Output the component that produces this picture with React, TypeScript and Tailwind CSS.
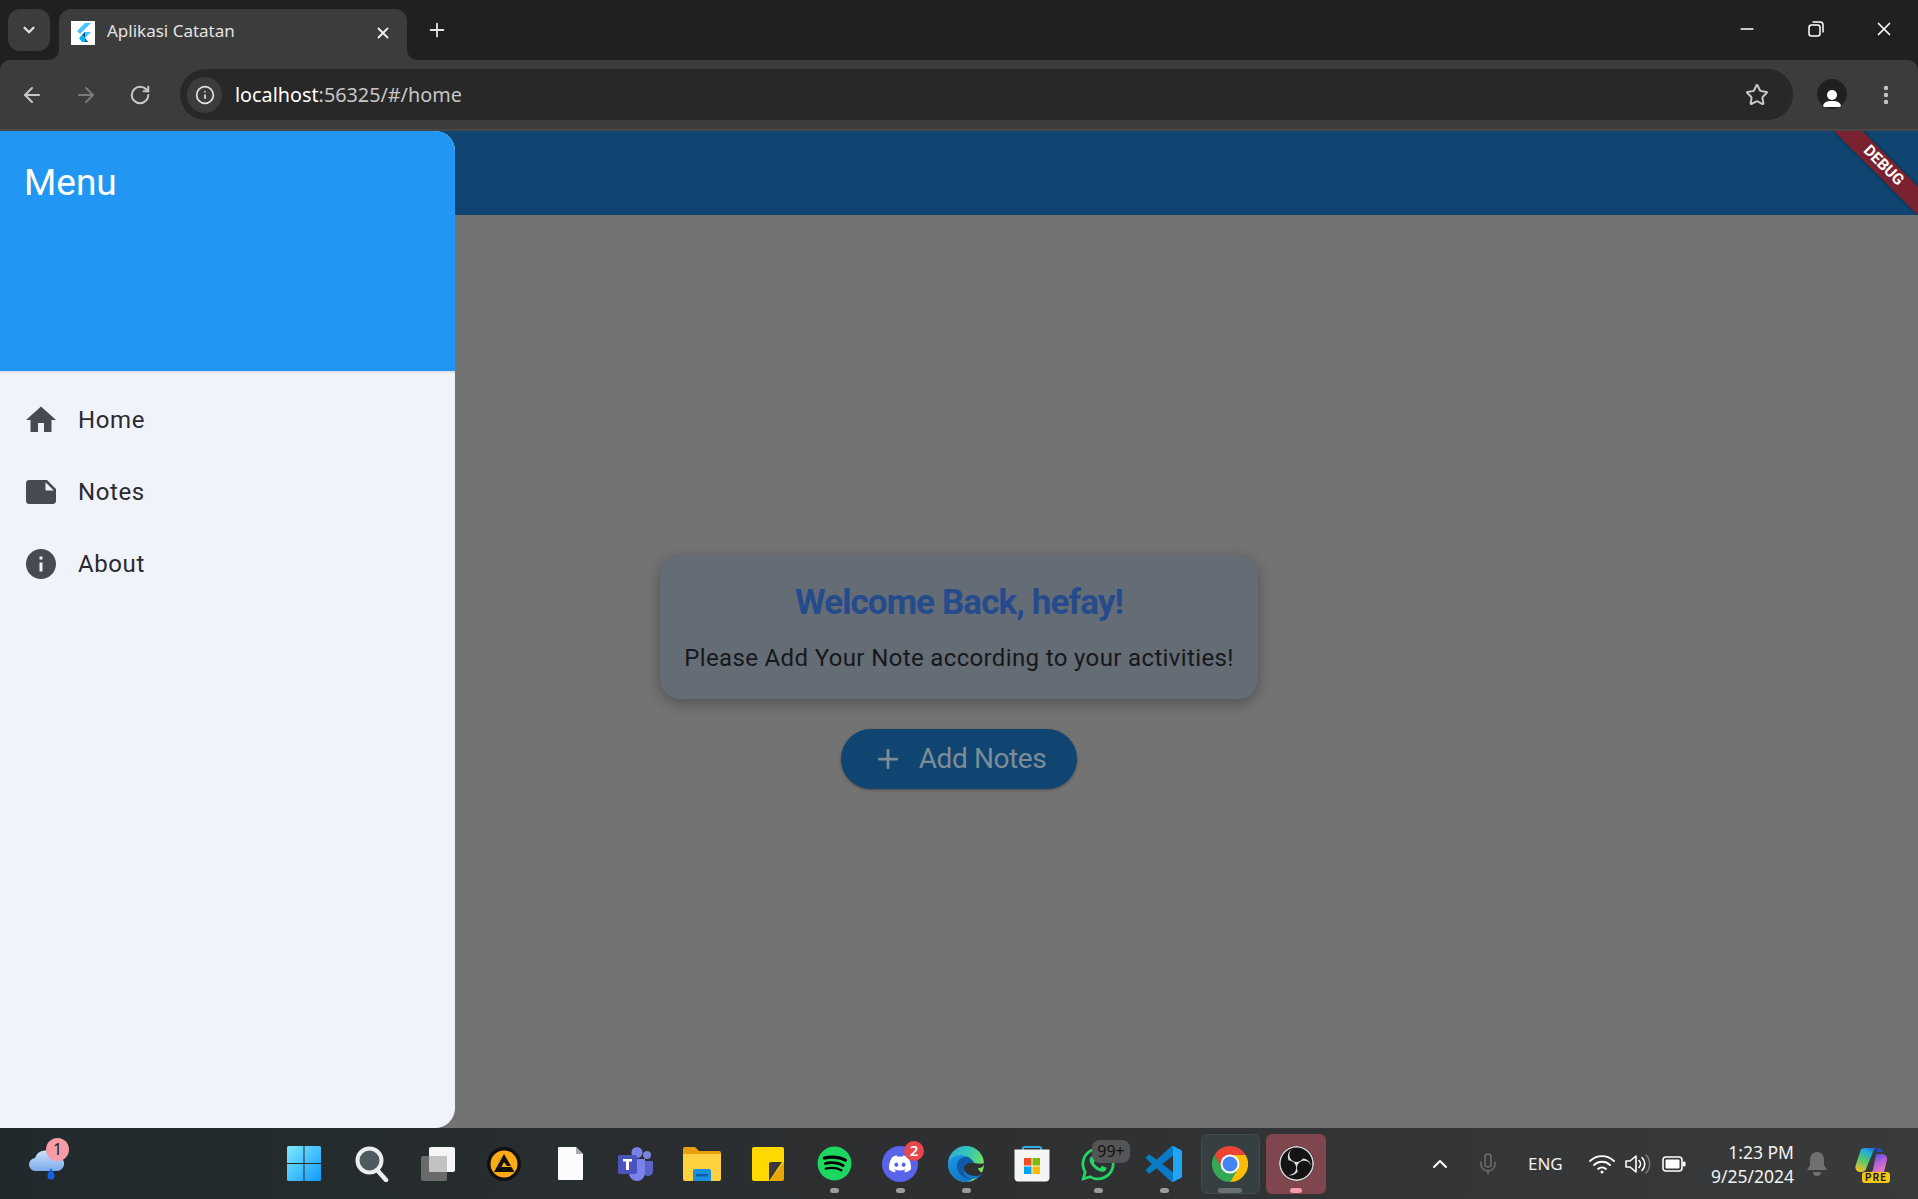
// Flutter notes app in a Chrome window with the drawer open, Windows 11 taskbar below
import type { ReactNode } from 'react';
import { ArrowLeft, ArrowRight, ChevronDown, ChevronUp, Info, Mic, Minus, MoreVertical, Plus, RotateCw, Star, X } from 'lucide-react';
import { FaDiscord, FaSpotify, FaWhatsapp } from 'react-icons/fa';
import { SiObsstudio } from 'react-icons/si';

const roboto = "font-['Roboto',sans-serif]";
const segoe = "font-['Noto_Sans',sans-serif]";

function FlutterFavicon() {
  return (
    <svg viewBox="0 0 24 24" className="h-full w-full bg-white">
      <path d="M14 2h6L9 13l-3-3z" fill="#47c5fb" />
      <path d="M14 11h6l-6 6-3-3z" fill="#47c5fb" />
      <path d="M11 14l3-3 0 6z" fill="#00569e" />
      <path d="M11 14l3 3 3 4h-6l-3-4z" fill="#00b5f8" />
      <path d="M14 17l3 4h-3z" fill="#00569e" />
    </svg>
  );
}

function TabStrip() {
  return (
    <div className="flex h-[60px] items-end bg-[#1f2020] pl-2">
      <div className="mb-[9px] flex h-[42px] w-[42px] items-center justify-center rounded-[12px] bg-[#3c3c3c]">
        <ChevronDown size={18} strokeWidth={3} className="text-[#e3e3e3]" />
      </div>
      <div className="relative ml-[9px] flex h-[51px] w-[348px] items-center rounded-t-[12px] bg-[#3c3c3c] pb-[3px] pl-3 pr-[15px]">
        <span className="absolute -left-[10px] bottom-0 h-[10px] w-[10px] bg-[#3c3c3c]">
          <span className="block h-full w-full rounded-br-[10px] bg-[#1f2020]" />
        </span>
        <span className="absolute -right-[10px] bottom-0 h-[10px] w-[10px] bg-[#3c3c3c]">
          <span className="block h-full w-full rounded-bl-[10px] bg-[#1f2020]" />
        </span>
        <div className="h-6 w-6 shrink-0">
          <FlutterFavicon />
        </div>
        <span className={`ml-3 flex-1 pb-[4px] text-[17px] leading-[24px] text-[#e3e3e3] ${segoe}`}>Aplikasi Catatan</span>
        <X size={18} strokeWidth={2.4} className="text-[#f0f0f0]" />
      </div>
      <div className="mb-[9px] ml-[9px] flex h-[42px] w-[42px] items-center justify-center">
        <Plus size={22} strokeWidth={2} className="text-[#e3e3e3]" />
      </div>
      <div className="mb-[20px] ml-auto flex items-center">
        <div className="flex w-[70px] justify-center">
          <Minus size={20} strokeWidth={2} className="text-white" />
        </div>
        <div className="flex w-[68px] justify-center">
          <svg width="16" height="16" viewBox="0 0 16 16" fill="none" stroke="white" strokeWidth="1.5">
            <rect x="1" y="4" width="11" height="11" rx="2.5" />
            <path d="M4.5 1h7.5a3 3 0 0 1 3 3v7.5" />
          </svg>
        </div>
        <div className="flex w-[68px] justify-center">
          <X size={22} strokeWidth={1.8} className="text-white" />
        </div>
      </div>
    </div>
  );
}

function Toolbar() {
  return (
    <div className="flex h-[71px] items-start rounded-t-[10px] border-b-2 border-[#484848] bg-[#3c3c3c] pt-[9px]">
      <div className="flex h-[51px] w-[180px] items-center pl-[10px]">
        <div className="flex w-[44px] justify-center">
          <ArrowLeft size={24} strokeWidth={2} className="text-[#c7c7c7]" />
        </div>
        <div className="ml-[10px] flex w-[44px] justify-center">
          <ArrowRight size={24} strokeWidth={2} className="text-[#7a7a7a]" />
        </div>
        <div className="ml-[10px] flex w-[44px] justify-center">
          <RotateCw size={22} strokeWidth={2.2} className="text-[#c7c7c7]" />
        </div>
      </div>
      <div className="flex h-[51px] w-[1613px] items-center rounded-full bg-[#282828] pl-[7px] pr-[24px]">
        <div className="flex h-[36px] w-[35px] items-center justify-center rounded-full bg-[#3c3c3c]">
          <Info size={20} strokeWidth={2} className="text-[#e3e3e3]" />
        </div>
        <span className={`ml-[13px] flex-1 text-[19.8px] ${segoe}`}>
          <span className="text-white">localhost</span>
          <span className="text-[#c7c7c7]">:56325/#/home</span>
        </span>
        <Star size={24} strokeWidth={2} className="text-[#c7c7c7]" />
      </div>
      <div className="ml-[24px] flex h-[30px] w-[30px] translate-y-[10px] items-end justify-center overflow-hidden rounded-full bg-[#1f2020]">
        <svg width="22" height="24" viewBox="0 0 22 24" fill="white">
          <circle cx="11" cy="10" r="5" />
          <path d="M2 22c0-5 4-6 9-6s9 1 9 6z" />
        </svg>
      </div>
      <div className="ml-[27px] flex h-[51px] w-[24px] items-center justify-center">
        <MoreVertical size={24} strokeWidth={2.4} className="text-[#c7c7c7]" />
      </div>
    </div>
  );
}

function DebugBanner() {
  return (
    <div className="absolute right-0 top-0 h-[84px] w-[84px] overflow-hidden">
      <div
        className={`absolute left-[-21px] top-[25px] flex h-[20px] w-[140px] rotate-45 items-center justify-center bg-[#7a2230] text-[15.5px] font-bold leading-none text-white shadow-[0_0_4px_rgba(0,0,0,0.35)] ${roboto}`}
      >
        DEBUG
      </div>
    </div>
  );
}

function HomeIcon() {
  return <path d="M10 20v-6h4v6h5v-8h3L12 3 2 12h3v8z" />;
}

function NoteIcon() {
  return <path d="M22 10l-6-6H4c-1.1 0-2 .9-2 2v12.01c0 1.1.9 1.99 2 1.99l16-.01c1.1 0 2-.89 2-1.99v-8zm-7-4.5l5.5 5.5H15V5.5z" />;
}

function InfoIcon() {
  return <path d="M12 2C6.48 2 2 6.48 2 12s4.48 10 10 10 10-4.48 10-10S17.52 2 12 2zm1 15h-2v-6h2v6zm0-8h-2V7h2v2z" />;
}

const menuItems = [
  { label: 'Home', icon: <HomeIcon /> },
  { label: 'Notes', icon: <NoteIcon /> },
  { label: 'About', icon: <InfoIcon /> },
];

function Drawer() {
  return (
    <aside className={`absolute bottom-0 left-0 top-0 w-[455px] overflow-hidden rounded-r-[20px] bg-[#f1f3fb] ${roboto}`}>
      <div className="h-[242px] border-b-2 border-[#e1e3ec] bg-[#2196f3] pl-[24px] pt-[30px]">
        <h2 className="text-[37px] leading-[43px] text-white">Menu</h2>
      </div>
      <nav className="pt-[11px]">
        {menuItems.map((item) => (
          <div key={item.label} className="flex h-[72px] items-center pl-[23px]">
            <svg viewBox="0 0 24 24" width="36" height="36" fill="#454a53">
              {item.icon}
            </svg>
            <span className="ml-[19px] text-[24px] leading-none tracking-[0.6px] text-[#2a2a30]">{item.label}</span>
          </div>
        ))}
      </nav>
    </aside>
  );
}

function Page() {
  return (
    <div className={`relative flex min-h-0 flex-1 flex-col bg-[#737374] ${roboto}`}>
      <header className="relative h-[84px] shrink-0 bg-[#0f4570]">
        <DebugBanner />
      </header>
      <main className="flex flex-1 flex-col items-center justify-center">
        <div className="flex h-[144px] w-[598px] flex-col items-center rounded-[20px] bg-[#646c75] pt-[26px] shadow-[0_4px_14px_rgba(0,0,0,0.3)]">
          <h1 className="text-[35px] font-bold leading-[44px] tracking-[-0.9px] text-[#254b8c]">Welcome Back, hefay!</h1>
          <p className="mt-[17px] text-[24px] leading-[32px] tracking-[0.36px] text-[#17181b]">Please Add Your Note according to your activities!</p>
        </div>
        <button className="mt-[30px] flex h-[60px] w-[236px] items-center justify-center rounded-full bg-[#0f4570] shadow-[0_1px_3px_rgba(0,0,0,0.35)]">
          <Plus size={30} strokeWidth={2.2} className="translate-x-[1px] text-[#7d8c99]" />
          <span className="ml-[17px] text-[28px] leading-none tracking-[-0.4px] text-[#7d8c99]">Add Notes</span>
        </button>
      </main>
      <Drawer />
    </div>
  );
}

function WeatherIcon() {
  return (
    <svg width="38" height="34" viewBox="0 0 38 34">
      <defs>
        <linearGradient id="cloud" x1="0" y1="0" x2="0" y2="1">
          <stop offset="0" stopColor="#cfe1fb" />
          <stop offset="1" stopColor="#7aa9ec" />
        </linearGradient>
      </defs>
      <path d="M8 24a6.5 6.5 0 0 1-1-13A11 11 0 0 1 27 9a7.5 7.5 0 0 1 3 15z" fill="url(#cloud)" />
      <path d="M23 21c2 3.5 3.5 5.5 3.5 8a3.5 3.5 0 0 1-7 0c0-2.5 1.5-4.5 3.5-8z" fill="#1461e6" />
    </svg>
  );
}

function WindowsIcon() {
  return (
    <svg width="34" height="35" viewBox="0 0 34 35" className="-translate-x-[2px]">
      <defs>
        <linearGradient id="win" x1="0" y1="0" x2="1" y2="1">
          <stop offset="0" stopColor="#7de9ff" />
          <stop offset="1" stopColor="#0f9bfb" />
        </linearGradient>
      </defs>
      <path d="M0 1.5a1.5 1.5 0 0 1 1.5-1.5H16.5v17H0zM17.5 0h15A1.5 1.5 0 0 1 34 1.5V17H17.5zM0 18h16.5v17H1.5A1.5 1.5 0 0 1 0 33.5zM17.5 18H34v15.5a1.5 1.5 0 0 1-1.5 1.5h-15z" fill="url(#win)" />
    </svg>
  );
}

function SearchIcon() {
  return (
    <svg width="34" height="36" viewBox="0 0 34 36">
      <circle cx="14.5" cy="14.5" r="12" fill="#4d5a60" stroke="#eceeee" strokeWidth="4" />
      <path d="M23 25l8 9" stroke="#eceeee" strokeWidth="4.5" strokeLinecap="round" />
    </svg>
  );
}

function TaskViewIcon() {
  return (
    <svg width="36" height="36" viewBox="0 0 36 36">
      <rect x="1" y="10" width="26" height="25" rx="2" fill="#6a6a6a" />
      <rect x="9" y="1" width="26" height="25" rx="2" fill="#f5f5f5" />
      <path d="M9 10h18v16H11a2 2 0 0 1-2-2z" fill="#c2c2c2" />
    </svg>
  );
}

function AimpIcon() {
  return (
    <svg width="34" height="34" viewBox="0 0 34 34">
      <circle cx="17" cy="17" r="17" fill="#111" />
      <circle cx="17" cy="17" r="13.5" fill="#fbab18" />
      <path fillRule="evenodd" d="M17 7L7 25h20.5L24.5 20h-10l2.500-5 3 4h4z" fill="#111" />
    </svg>
  );
}

function FileIcon() {
  return (
    <svg width="25" height="33" viewBox="0 0 25 33">
      <path d="M1 0h17l7 7v25a1 1 0 0 1-1 1H1a1 1 0 0 1-1-1V1a1 1 0 0 1 1-1z" fill="#fbfbfb" />
      <path d="M18 0l7 7h-7z" fill="#a9a9a9" />
    </svg>
  );
}

function TeamsIcon() {
  return (
    <svg width="36" height="36" viewBox="0 0 36 36">
      <circle cx="29" cy="9" r="4" fill="#7b83d8" />
      <path d="M24 15h11v10a5 5 0 0 1-9 3z" fill="#5b63c4" />
      <circle cx="19" cy="6.5" r="5.5" fill="#7b83eb" />
      <path d="M11 13h16v14a8 8 0 0 1-16 0z" fill="#7b83eb" />
      <rect x="0" y="9" width="19" height="19" rx="2" fill="#4b53bc" />
      <path d="M5 13h9v2.5h-3V24H8v-8.5H5z" fill="#fff" />
    </svg>
  );
}

function ExplorerIcon() {
  return (
    <svg width="38" height="34" viewBox="0 0 38 34">
      <path d="M0 2a2 2 0 0 1 2-2h10l4 4h20a2 2 0 0 1 2 2v6H0z" fill="#e8a10c" />
      <path d="M0 7h38v25a2 2 0 0 1-2 2H2a2 2 0 0 1-2-2z" fill="#fdd13f" />
      <path d="M10 24a2 2 0 0 1 2-2h14a2 2 0 0 1 2 2v10H10z" fill="#1a8fdc" />
      <rect x="13" y="27" width="12" height="2.5" fill="#0c5fa6" />
    </svg>
  );
}

function StickyIcon() {
  return (
    <svg width="32" height="34" viewBox="0 0 32 34">
      <path d="M2 0h28a2 2 0 0 1 2 2v18L18 34H2a2 2 0 0 1-2-2V2a2 2 0 0 1 2-2z" fill="#ffd800" />
      <path d="M32 15v17a2 2 0 0 1-2 2H17z" fill="#e8a707" />
      <path d="M30 15H19a2 2 0 0 0-2 2v17z" fill="#38383a" />
    </svg>
  );
}

function SpotifyIcon() {
  return (
    <div className="relative h-[35px] w-[35px]">
      <span className="absolute inset-[4px] rounded-full bg-black" />
      <FaSpotify size={35} className="relative text-[#1ed760]" />
    </div>
  );
}

function DiscordIcon() {
  return (
    <div className="flex h-[36px] w-[36px] items-center justify-center rounded-full bg-[#5a64ea]">
      <FaDiscord size={24} className="text-white" />
    </div>
  );
}

function EdgeIcon() {
  return (
    <svg width="36" height="36" viewBox="0 0 36 36">
      <defs>
        <linearGradient id="edgeA" x1="0" y1="0" x2="1" y2="0.5">
          <stop offset="0" stopColor="#2aa8e6" />
          <stop offset="0.55" stopColor="#35c8b0" />
          <stop offset="1" stopColor="#7be35c" />
        </linearGradient>
        <linearGradient id="edgeB" x1="0" y1="0" x2="0.4" y2="1">
          <stop offset="0" stopColor="#1c97e8" />
          <stop offset="1" stopColor="#1378c8" />
        </linearGradient>
      </defs>
      <circle cx="18" cy="18" r="18" fill="url(#edgeA)" />
      <path d="M0 18C2 10 12 7 20 11c3 1.5 5 3.5 6 6-5-1-9 1-10 5-1 5 3 9 9 10-2 2.5-4 4-7 4C8 36 0 28 0 18z" fill="url(#edgeB)" />
      <path d="M20 11c-6-1-11 3-11 9 0 7 6 13 14 13 5 0 9-3 11-6l-8 5c-6-1-10-5-9-10 1-4 5-6 9-5-1-2.5-3-4.5-6-6z" fill="#0e5aa8" />
      <path d="M16 22c1-4 5-6 10-5 4 .8 8 1 10 0 0 3-2 5-6 5 1 3 3 5 6 5-2 3-5 5-10 5-6-1-11-5-10-10z" fill="#2e3032" />
      <path d="M22 32c-4-1-7-4-6-9 1 4 5 7 12 7 3 0 5-1 7-3-2 3-6 6-11 6z" fill="#1378c8" />
    </svg>
  );
}

function StoreIcon() {
  return (
    <svg width="36" height="36" viewBox="0 0 36 36">
      <path d="M9 5V2.5a1.5 1.5 0 0 1 1.5-1.5h15A1.5 1.5 0 0 1 27 2.5V5" fill="none" stroke="#35a9e6" strokeWidth="2" />
      <path d="M0.5 3.5h35v28a4 4 0 0 1-4 4h-27a4 4 0 0 1-4-4z" fill="#f5f5f5" />
      <rect x="10" y="12" width="7.5" height="7.5" fill="#f25022" />
      <rect x="18.5" y="12" width="7.5" height="7.5" fill="#7fba00" />
      <rect x="10" y="20.5" width="7.5" height="7.5" fill="#00a4ef" />
      <rect x="18.5" y="20.5" width="7.5" height="7.5" fill="#ffb900" />
    </svg>
  );
}

function VsCodeIcon() {
  return (
    <svg width="36" height="36" viewBox="0 0 100 100">
      <path
        fillRule="evenodd"
        d="M71 99a6 6 0 0 0 5-.2l20.5-9.800A6 6 0 0 0 100 83.5v-67a6 6 0 0 0-3.5-5.5L76 1a6 6 0 0 0-7 1.200L29.5 38 12 25a4 4 0 0 0-5 .2l-5.5 5a4 4 0 0 0 0 6L16.5 50 1.5 63.800a4 4 0 0 0 0 6l5.5 5a4 4 0 0 0 5 .2l17.5-13L69 98z M75 27 45 50l30 23z"
        fill="#0a7bc6"
      />
      <path d="M72 .5a6 6 0 0 1 4 .5l20.5 10a6 6 0 0 1 3.5 5.500v67a6 6 0 0 1-3.5 5.500L76 99a6 6 0 0 1-4 .5 6 6 0 0 0 3-5V6a6 6 0 0 0-3-5.500z" fill="#1fa6f2" />
      <path d="M75 6v88l21-10V16z" fill="#1fa6f2" />
    </svg>
  );
}

function ChromeIcon() {
  return (
    <svg width="36" height="36" viewBox="0 0 36 36">
      <path d="M18 9H33.6A18 18 0 0 0 2.4 9L10.2 22.5L18 18z" fill="#ea4335" />
      <path d="M25.8 22.5L18 36A18 18 0 0 0 33.6 9H18L18 18z" fill="#fbbc04" />
      <path d="M10.2 22.5L2.4 9A18 18 0 0 0 18 36L25.8 22.5L18 18z" fill="#34a853" />
      <circle cx="18" cy="18" r="9.5" fill="#fff" />
      <circle cx="18" cy="18" r="7.5" fill="#4285f4" />
    </svg>
  );
}

function ObsIcon() {
  return (
    <div className="flex h-[36px] w-[36px] items-center justify-center rounded-full">
      <SiObsstudio size={35} className="rounded-full bg-[#141414] text-[#dcdcdc]" />
    </div>
  );
}

function CopilotIcon() {
  return (
    <svg width="32" height="26" viewBox="0 0 32 26">
      <defs>
        <linearGradient id="copA" x1="0.2" y1="1" x2="0.7" y2="0">
          <stop offset="0" stopColor="#f6c02c" />
          <stop offset="0.45" stopColor="#55c96b" />
          <stop offset="0.8" stopColor="#1fb0d8" />
          <stop offset="1" stopColor="#1f6fe0" />
        </linearGradient>
        <linearGradient id="copB" x1="0.3" y1="0" x2="0.8" y2="1">
          <stop offset="0" stopColor="#4a4fd8" />
          <stop offset="0.45" stopColor="#b560dc" />
          <stop offset="1" stopColor="#f583b0" />
        </linearGradient>
      </defs>
      <path d="M9 0h14c-3 0-4 2-5 4L11 21c-1 2-2 3-5 3a5 5 0 0 1-5.5-6L5 4a5 5 0 0 1 4-4z" fill="url(#copA)" />
      <path d="M23 0c3 0 4 1.500 4.5 4H21z" fill="#1f4fd0" />
      <path d="M21 6h6a5 5 0 0 1 5 6l-2.500 10a5 5 0 0 1-5 4H13c3 0 4-2 5-4z" fill="url(#copB)" />
    </svg>
  );
}

interface TaskItemProps {
  children: ReactNode;
  running?: boolean;
  badge?: ReactNode;
}

function TaskItem({ children, running, badge }: TaskItemProps) {
  return (
    <div className="relative flex h-[70px] w-[66px] items-center justify-center">
      {children}
      {badge}
      {running && <span className="absolute bottom-[6px] h-[5px] w-[9px] rounded-full bg-[#9b9b9b]" />}
    </div>
  );
}

function Taskbar() {
  return (
    <footer className={`flex h-[71px] shrink-0 items-center bg-gradient-to-r from-[#202a2c] via-[#2e2f31] to-[#393b3b] ${segoe}`}>
      <div className="flex w-[273px] items-center pl-[28px]">
        <div className="relative">
          <WeatherIcon />
          <span className="absolute -right-[3px] -top-[9px] flex h-[23px] w-[23px] items-center justify-center rounded-full bg-[#f79ca6] text-[16px] text-[#222]">1</span>
        </div>
      </div>
      <div className="flex items-center">
        <TaskItem><WindowsIcon /></TaskItem>
        <TaskItem><SearchIcon /></TaskItem>
        <TaskItem><TaskViewIcon /></TaskItem>
        <TaskItem><AimpIcon /></TaskItem>
        <TaskItem><FileIcon /></TaskItem>
        <TaskItem><TeamsIcon /></TaskItem>
        <TaskItem><ExplorerIcon /></TaskItem>
        <TaskItem><StickyIcon /></TaskItem>
        <TaskItem running><SpotifyIcon /></TaskItem>
        <TaskItem
          running
          badge={<span className="absolute right-[9px] top-[12px] flex h-[20px] w-[20px] items-center justify-center rounded-full bg-[#e5484d] text-[15px] font-semibold text-white">2</span>}
        >
          <DiscordIcon />
        </TaskItem>
        <TaskItem running><EdgeIcon /></TaskItem>
        <TaskItem><StoreIcon /></TaskItem>
        <TaskItem
          running
          badge={<span className="absolute left-[27px] top-[11px] flex h-[23px] w-[38px] items-center justify-center rounded-[8px] bg-[#555] text-[16px] text-[#111]">99+</span>}
        >
          <FaWhatsapp size={38} className="text-[#25d366]" />
        </TaskItem>
        <TaskItem running><VsCodeIcon /></TaskItem>
        <div className="relative flex h-[60px] w-[66px] items-center justify-center px-[3px]">
          <div className="flex h-[60px] w-[59px] items-center justify-center rounded-[6px] border border-[#424b4e] bg-[#363f42]">
            <ChromeIcon />
          </div>
          <span className="absolute bottom-[1px] h-[5px] w-[24px] rounded-full bg-[#6b6f71]" />
        </div>
        <div className="relative flex h-[60px] w-[66px] items-center justify-center px-[3px]">
          <div className="flex h-[60px] w-[60px] items-center justify-center rounded-[6px] bg-[#7f474d]">
            <ObsIcon />
          </div>
          <span className="absolute bottom-[1px] h-[5px] w-[12px] rounded-full bg-[#f79ca6]" />
        </div>
      </div>
      <div className="flex flex-1 items-center text-[#f2f2f2]">
        <div className="ml-[93px] flex w-[36px] justify-center">
          <ChevronUp size={24} strokeWidth={2} className="text-white" />
        </div>
        <div className="ml-[12px] flex w-[36px] justify-center">
          <Mic size={24} strokeWidth={1.6} className="text-[#6a6c6c]" />
        </div>
        <span className="ml-[22px] w-[36px] text-[17px] leading-none">ENG</span>
        <div className="ml-[23px] flex w-[30px] justify-center">
          <svg width="26" height="20" viewBox="0 0 26 20" fill="none" stroke="white" strokeWidth="1.8" strokeLinecap="round">
            <path d="M1 7a17 17 0 0 1 24 0" />
            <path d="M5 11a11.5 11.5 0 0 1 16 0" />
            <path d="M9 15a6 6 0 0 1 8 0" />
            <circle cx="13" cy="18" r="1.5" fill="white" stroke="none" />
          </svg>
        </div>
        <div className="ml-[5px] flex w-[32px] justify-center">
          <svg width="26" height="20" viewBox="0 0 26 20" fill="none" stroke="white" strokeWidth="1.6" strokeLinejoin="round" strokeLinecap="round">
            <path d="M1 7v6h4l6 5V2L5 7z" />
            <path d="M14 6.5a5 5 0 0 1 0 7" />
            <path d="M17 3.5a9 9 0 0 1 0 13" />
            <path d="M21 1a13 13 0 0 1 0 18" stroke="#777" />
          </svg>
        </div>
        <div className="ml-[7px] flex w-[26px] justify-center">
          <svg width="24" height="16" viewBox="0 0 24 16">
            <rect x="1" y="1" width="19" height="14" rx="3" fill="none" stroke="white" strokeWidth="1.6" />
            <rect x="3.5" y="3.5" width="14" height="9" rx="1" fill="white" />
            <rect x="21" y="5.5" width="2.5" height="5" rx="1" fill="white" />
          </svg>
        </div>
        <div className="ml-[19px] w-[88px] whitespace-nowrap text-right text-[17.5px] leading-[24px]">
          <div>1:23 PM</div>
          <div>9/25/2024</div>
        </div>
        <div className="ml-[11px] flex w-[24px] justify-center">
          <svg width="20" height="24" viewBox="0 0 20 24" fill="#6f7171">
            <path d="M10 0a7 7 0 0 1 7 7v6l3 5H0l3-5V7a7 7 0 0 1 7-7z" />
            <path d="M6 20h8a4 4 0 0 1-8 0z" />
          </svg>
        </div>
        <div className="relative ml-[20px] flex w-[44px] -translate-y-[3px] justify-center">
          <CopilotIcon />
          <span className={`absolute -bottom-[9px] left-[13px] rounded-[3px] bg-[#f7c513] px-[3px] text-[10px] font-bold leading-[11px] tracking-[1.2px] text-[#222] ${roboto}`}>PRE</span>
        </div>
      </div>
    </footer>
  );
}

export default function App() {
  return (
    <div className="flex h-[1199px] w-[1918px] flex-col overflow-hidden bg-[#1f2020]">
      <TabStrip />
      <Toolbar />
      <Page />
      <Taskbar />
    </div>
  );
}
